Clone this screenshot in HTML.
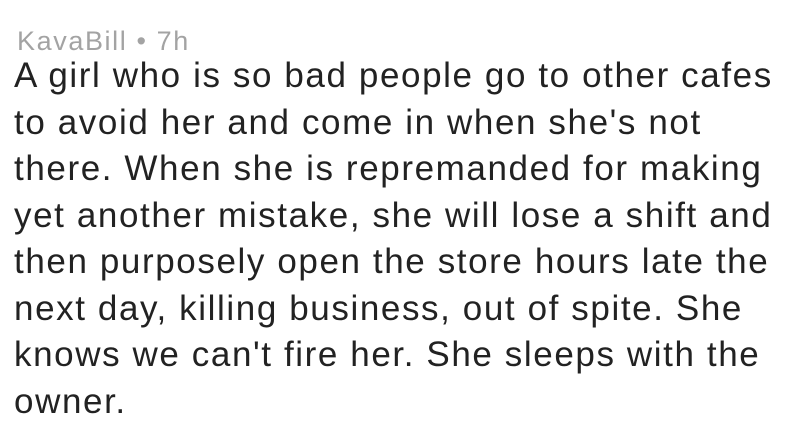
<!DOCTYPE html>
<html><head><meta charset="utf-8"><style>
html,body{margin:0;padding:0;background:#fff;width:800px;height:430px;overflow:hidden}
.h{position:absolute;left:17px;top:28px;font:27px/27px "Liberation Sans",sans-serif;letter-spacing:1.6px;color:#a3a3a3;white-space:nowrap}
.b{position:absolute;left:14px;top:53px;font:35px/46.5px "Liberation Sans",sans-serif;letter-spacing:1.6px;color:#222;white-space:nowrap}
</style></head><body>
<div class="h">KavaBill • 7h</div>
<div class="b">A girl who is so bad people go to other cafes<br>to avoid her and come in when she's not<br>there. When she is repremanded for making<br>yet another mistake, she will lose a shift and<br>then purposely open the store hours late the<br>next day, killing business, out of spite. She<br>knows we can't fire her. She sleeps with the<br>owner.</div>
</body></html>
